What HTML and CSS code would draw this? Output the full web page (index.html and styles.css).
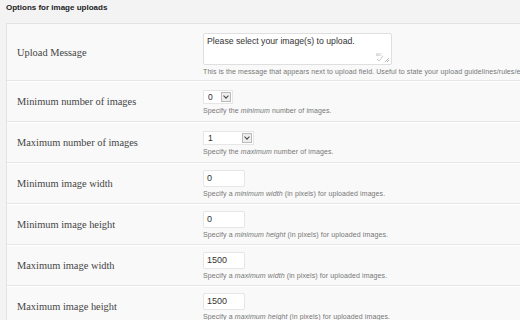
FILE: index.html
```html
<!DOCTYPE html>
<html lang="en">
<head>
    <meta charset="UTF-8">
    <meta name="viewport" content="width=device-width, initial-scale=1.0">
    <title>Image Upload Options</title>
    <link rel="stylesheet" href="styles.css">
</head>
<body>

<h3 class="section-title">Options for image uploads</h3>

<div class="options">
    <div class="row row-tall">
        <div class="label">Upload Message</div>
        <div class="field">
            <div class="textarea">
                Please select your image(s) to upload.
                <svg class="spell" width="10" height="9" viewBox="0 0 10 9">
                    <text x="1" y="3" font-size="3" fill="#bbb" font-family="Liberation Sans">ABC</text>
                    <path d="M2 6 L4 8 L8 3" stroke="#bbb" stroke-width="0.8" fill="none"/>
                </svg>
                <svg class="grip" width="6" height="6" viewBox="0 0 6 6">
                    <path d="M5 1 L1 5 M5 3 L3 5" stroke="#999" stroke-width="0.7"/>
                </svg>
            </div>
            <p class="help">This is the message that appears next to upload field. Useful to state your upload guidelines/rules/etc.</p>
        </div>
    </div>

    <div class="row">
        <div class="label">Minimum number of images</div>
        <div class="field">
            <div class="select select-small"><span class="value">0</span><span class="arrow"></span></div>
            <p class="help">Specify the <em>minimum</em> number of images.</p>
        </div>
    </div>

    <div class="row">
        <div class="label">Maximum number of images</div>
        <div class="field">
            <div class="select select-wide"><span class="value">1</span><span class="arrow"></span></div>
            <p class="help">Specify the <em>maximum</em> number of images.</p>
        </div>
    </div>

    <div class="row">
        <div class="label">Minimum image width</div>
        <div class="field">
            <div class="input">0</div>
            <p class="help">Specify a <em>minimum width</em> (in pixels) for uploaded images.</p>
        </div>
    </div>

    <div class="row">
        <div class="label">Minimum image height</div>
        <div class="field">
            <div class="input">0</div>
            <p class="help">Specify a <em>minimum height</em> (in pixels) for uploaded images.</p>
        </div>
    </div>

    <div class="row">
        <div class="label">Maximum image width</div>
        <div class="field">
            <div class="input">1500</div>
            <p class="help">Specify a <em>maximum width</em> (in pixels) for uploaded images.</p>
        </div>
    </div>

    <div class="row">
        <div class="label">Maximum image height</div>
        <div class="field">
            <div class="input">1500</div>
            <p class="help">Specify a <em>maximum height</em> (in pixels) for uploaded images.</p>
        </div>
    </div>
</div>

</body>
</html>
```

FILE: styles.css
```css
body {
    margin: 0;
    padding: 0 0 0 6px;
    background-color: #f3f3f3;
    font-family: "Liberation Sans", Arial, sans-serif;
    color: #333;
    overflow: hidden;
}

.section-title {
    margin: 0;
    padding: 3px 0 0;
    height: 20px;
    font-size: 8px;
    font-weight: bold;
    color: #222;
}

.options {
    background-color: #f9f9f9;
    border-top: 1px solid #e3e3e3;
    border-left: 1px solid #e3e3e3;
}

.row {
    display: grid;
    grid-template-columns: 196px 1fr;
    height: 40px;
    border-bottom: 1px solid #e6e6e6;
    box-shadow: 0 1px 0 #fff;
    align-items: center;
}

.row-tall {
    height: 56px;
}

.label {
    padding-left: 10px;
    font-family: "Liberation Serif", Georgia, serif;
    font-size: 10.4px;
    color: #444;
}

.field {
    display: flex;
    flex-direction: column;
    align-items: flex-start;
    gap: 3px;
    padding-top: 1px;
    min-width: 0;
}

.help {
    margin: 0;
    font-size: 7px;
    color: #777;
    white-space: nowrap;
    letter-spacing: 0.1px;
}

.textarea {
    position: relative;
    width: 181px;
    height: 26px;
    padding: 2px 3px;
    background-color: #fff;
    border: 1px solid #dfdfdf;
    border-radius: 2px;
    font-size: 8.7px;
    color: #333;
    margin-top: 2px;
}

.spell {
    position: absolute;
    right: 6px;
    bottom: 2px;
}

.grip {
    position: absolute;
    right: 1px;
    bottom: 1px;
}

.select {
    display: flex;
    align-items: center;
    justify-content: space-between;
    height: 14px;
    background-color: #fff;
    border: 1px solid #e6e6e6;
    font-size: 8.5px;
    box-sizing: border-box;
    padding: 0 1px 0 4px;
}

.select-small {
    width: 30px;
}

.select-wide {
    width: 51px;
}

.value {
    color: #2c2c3c;
}

.arrow {
    width: 10px;
    height: 10px;
    border: 1px solid #bbb;
    background-color: #eee;
    box-sizing: border-box;
    position: relative;
}

.arrow::after {
    content: "";
    position: absolute;
    left: 2px;
    top: 1px;
    width: 3px;
    height: 3px;
    border-right: 1px solid #444;
    border-bottom: 1px solid #444;
    transform: rotate(45deg);
}

.input {
    width: 34px;
    height: 15px;
    padding: 0 3px;
    line-height: 15px;
    background-color: #fff;
    border: 1px solid #e6e6e6;
    border-radius: 2px;
    font-size: 9px;
    color: #333;
}
```
